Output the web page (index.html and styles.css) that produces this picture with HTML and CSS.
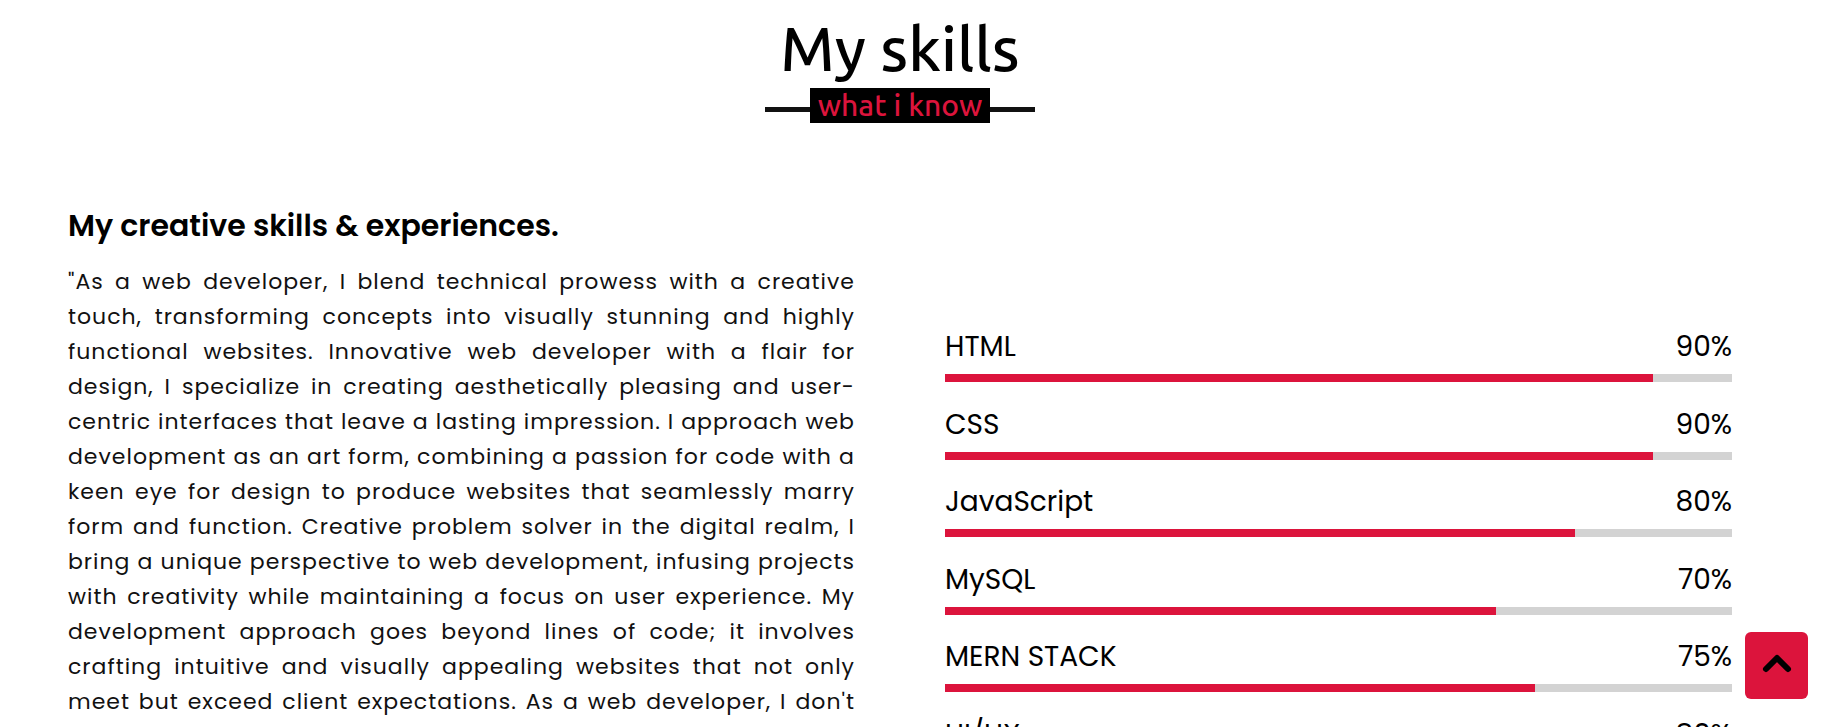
FILE: index.html
```html
<!DOCTYPE html>
<html lang="en">
<head>
<meta charset="utf-8">
<title>My skills</title>
<link rel="stylesheet" href="styles.css">
</head>
<body>
<section class="skills">
  <div class="title">
    <h2 class="title-main">My skills</h2>
    <div class="title-deco">
      <span class="deco-line"></span>
      <span class="deco-label">what i know</span>
      <span class="deco-line"></span>
    </div>
  </div>
  <div class="skills-content">
    <div class="column left">
      <h3 class="heading">My creative skills &amp; experiences.</h3>
      <p class="text">"As a web developer, I blend technical prowess with a creative touch, transforming concepts into visually stunning and highly functional websites. Innovative web developer with a flair for design, I specialize in creating aesthetically pleasing and user-centric interfaces that leave a lasting impression. I approach web development as an art form, combining a passion for code with a keen eye for design to produce websites that seamlessly marry form and function. Creative problem solver in the digital realm, I bring a unique perspective to web development, infusing projects with creativity while maintaining a focus on user experience. My development approach goes beyond lines of code; it involves crafting intuitive and visually appealing websites that not only meet but exceed client expectations. As a web developer, I don't just build websites, I build digital experiences that leave a lasting mark."</p>
    </div>
    <div class="column right">
      <div class="bars">
        <div class="info"><span>HTML</span><span>90%</span></div>
        <div class="line"><div class="fill" style="width:90%"></div></div>
      </div>
      <div class="bars">
        <div class="info"><span>CSS</span><span>90%</span></div>
        <div class="line"><div class="fill" style="width:90%"></div></div>
      </div>
      <div class="bars">
        <div class="info"><span>JavaScript</span><span>80%</span></div>
        <div class="line"><div class="fill" style="width:80%"></div></div>
      </div>
      <div class="bars">
        <div class="info"><span>MySQL</span><span>70%</span></div>
        <div class="line"><div class="fill" style="width:70%"></div></div>
      </div>
      <div class="bars">
        <div class="info"><span>MERN STACK</span><span>75%</span></div>
        <div class="line"><div class="fill" style="width:75%"></div></div>
      </div>
      <div class="bars">
        <div class="info"><span>UI/UX</span><span>80%</span></div>
        <div class="line"><div class="fill" style="width:80%"></div></div>
      </div>
    </div>
  </div>
</section>
<a class="scroll-up" href="#" aria-label="Scroll to top">
  <svg width="63" height="67" viewBox="0 0 63 67" aria-hidden="true">
    <polyline points="21,37 32,26 43,37" fill="none" stroke="#000" stroke-width="6" stroke-linecap="round" stroke-linejoin="round"/>
  </svg>
</a>
</body>
</html>
```
FILE: styles.css
```css
html {
  scrollbar-width: none;
}
html::-webkit-scrollbar {
  display: none;
}
* {
  box-sizing: border-box;
}
body {
  margin: 0;
  background: #fff;
  color: #111;
  font-family: Poppins, "Open Sans", sans-serif;
}
.skills {
  padding: 0 96px 0 68px;
}
.title {
  display: flex;
  flex-direction: column;
  align-items: center;
  padding-top: 18px;
}
.title-main {
  margin: 0;
  font-family: Ubuntu, "Open Sans", sans-serif;
  font-weight: 500;
  font-size: 62px;
  line-height: 60px;
  color: #000;
}
.title-deco {
  display: flex;
  width: 270px;
  margin-top: 10px;
}
.deco-line {
  flex: 1;
  height: 5px;
  margin-top: 19px;
  background: #111;
}
.deco-label {
  background: #000;
  color: crimson;
  font-family: Ubuntu, "Open Sans", sans-serif;
  font-weight: 500;
  font-size: 30px;
  line-height: 35px;
  height: 35px;
  padding: 0 8px;
}
.skills-content {
  display: grid;
  grid-template-columns: 787px 787px;
  column-gap: 90px;
  margin-top: 87px;
}
.heading {
  margin: 0 0 22px;
  font-size: 30px;
  line-height: 32px;
  font-weight: 600;
  color: #000;
}
.text {
  margin: 0;
  font-size: 22px;
  line-height: 35px;
  font-weight: 400;
  letter-spacing: 1px;
  text-align: justify;
  color: #111;
}
.right {
  padding-top: 122px;
}
.bars {
  margin-bottom: 27.5px;
}
.info {
  display: flex;
  justify-content: space-between;
  font-size: 28px;
  line-height: 30px;
  color: #000;
  margin-bottom: 12px;
}
.line {
  height: 8px;
  background: lightgrey;
}
.fill {
  height: 100%;
  background: crimson;
}
.scroll-up {
  position: fixed;
  right: 20px;
  bottom: 28px;
  width: 63px;
  height: 67px;
  border-radius: 6px;
  background: crimson;
  display: flex;
}
```
